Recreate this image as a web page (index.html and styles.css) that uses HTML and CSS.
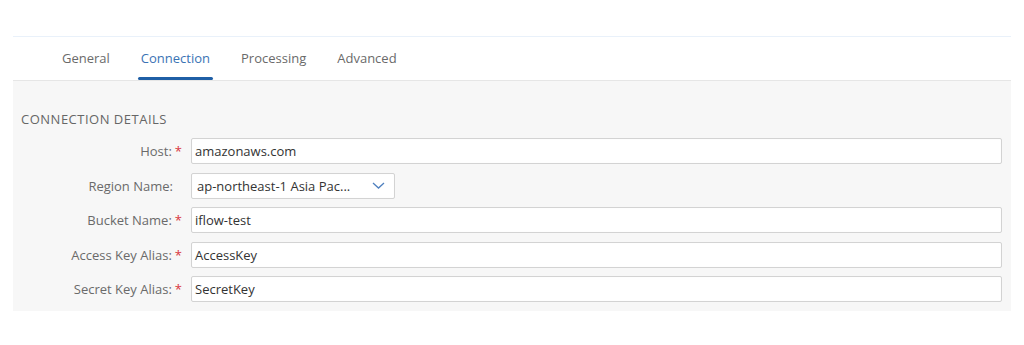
FILE: index.html
```html
<!DOCTYPE html>
<html>
<head>
<meta charset="utf-8">
<link rel="stylesheet" href="styles.css">
</head>
<body>
<div class="frame">
  <nav class="tabs">
    <div class="tab">General</div>
    <div class="tab active">Connection</div>
    <div class="tab">Processing</div>
    <div class="tab">Advanced</div>
  </nav>
  <section class="panel">
    <h2 class="heading">CONNECTION DETAILS</h2>
    <div class="form">
      <div class="row">
        <label class="label">Host:<span class="req">*</span></label>
        <div class="input wide">amazonaws.com</div>
      </div>
      <div class="row">
        <label class="label plain">Region Name:</label>
        <div class="input select">
          <span>ap-northeast-1 Asia Pac...</span>
          <svg class="chev" width="13" height="7" viewBox="0 0 13 7"><path d="M1 1 L6.5 6 L12 1" fill="none" stroke="#4f80bf" stroke-width="1.3"/></svg>
        </div>
      </div>
      <div class="row">
        <label class="label">Bucket Name:<span class="req">*</span></label>
        <div class="input wide">iflow-test</div>
      </div>
      <div class="row">
        <label class="label">Access Key Alias:<span class="req">*</span></label>
        <div class="input wide">AccessKey</div>
      </div>
      <div class="row">
        <label class="label">Secret Key Alias:<span class="req">*</span></label>
        <div class="input wide">SecretKey</div>
      </div>
    </div>
  </section>
</div>
</body>
</html>
```
FILE: styles.css
```css
html, body {
  margin: 0;
  padding: 0;
  background: #ffffff;
}
body {
  font-family: "Open Sans", "Liberation Sans", sans-serif;
  font-size: 13px;
  color: #333;
}
.frame {
  margin: 36px 0 0 13px;
  width: 998px;
  border-top: 1px solid #e9f1fa;
}
.tabs {
  display: flex;
  gap: 25px;
  padding-left: 46px;
  border-bottom: 1px solid #e6e6e6;
  box-sizing: border-box;
  height: 44px;
}
.tab {
  padding: 0 3px;
  line-height: 43px;
  color: #6a6a6a;
  position: relative;
}
.tab.active {
  color: #3a73b4;
}
.tab.active::after {
  content: "";
  position: absolute;
  left: 0;
  right: 0;
  bottom: 0;
  height: 3px;
  border-radius: 2px;
  background: #1f5fa6;
}
.panel {
  background: #f7f7f7;
  padding: 29px 9px 9px 8px;
}
.heading {
  margin: 0 0 10px 0;
  font-size: 13px;
  letter-spacing: 0.5px;
  font-weight: normal;
  color: #666;
  line-height: 18px;
}
.form {
  display: flex;
  flex-direction: column;
  gap: 8.5px;
}
.row {
  display: flex;
  align-items: center;
  height: 26px;
}
.label {
  width: 161px;
  text-align: right;
  color: #6a6a6a;
  padding-right: 9px;
  box-sizing: content-box;
  white-space: nowrap;
}
.label.plain {
  padding-right: 18px;
  width: 152px;
}
.req {
  color: #d9363e;
  margin-left: 3px;
  font-size: 13px;
}
.input {
  height: 26px;
  box-sizing: border-box;
  background: #fff;
  border: 1px solid #d3d3d3;
  border-radius: 2px;
  padding: 0 3px;
  line-height: 24px;
  color: #333;
  box-shadow: inset 0 0 1px rgba(0,0,0,0.05);
}
.wide {
  flex: 1;
}
.select {
  width: 204px;
  display: flex;
  align-items: center;
  justify-content: space-between;
  padding: 0 9px 0 5px;
}
.chev {
  display: block;
}
```
